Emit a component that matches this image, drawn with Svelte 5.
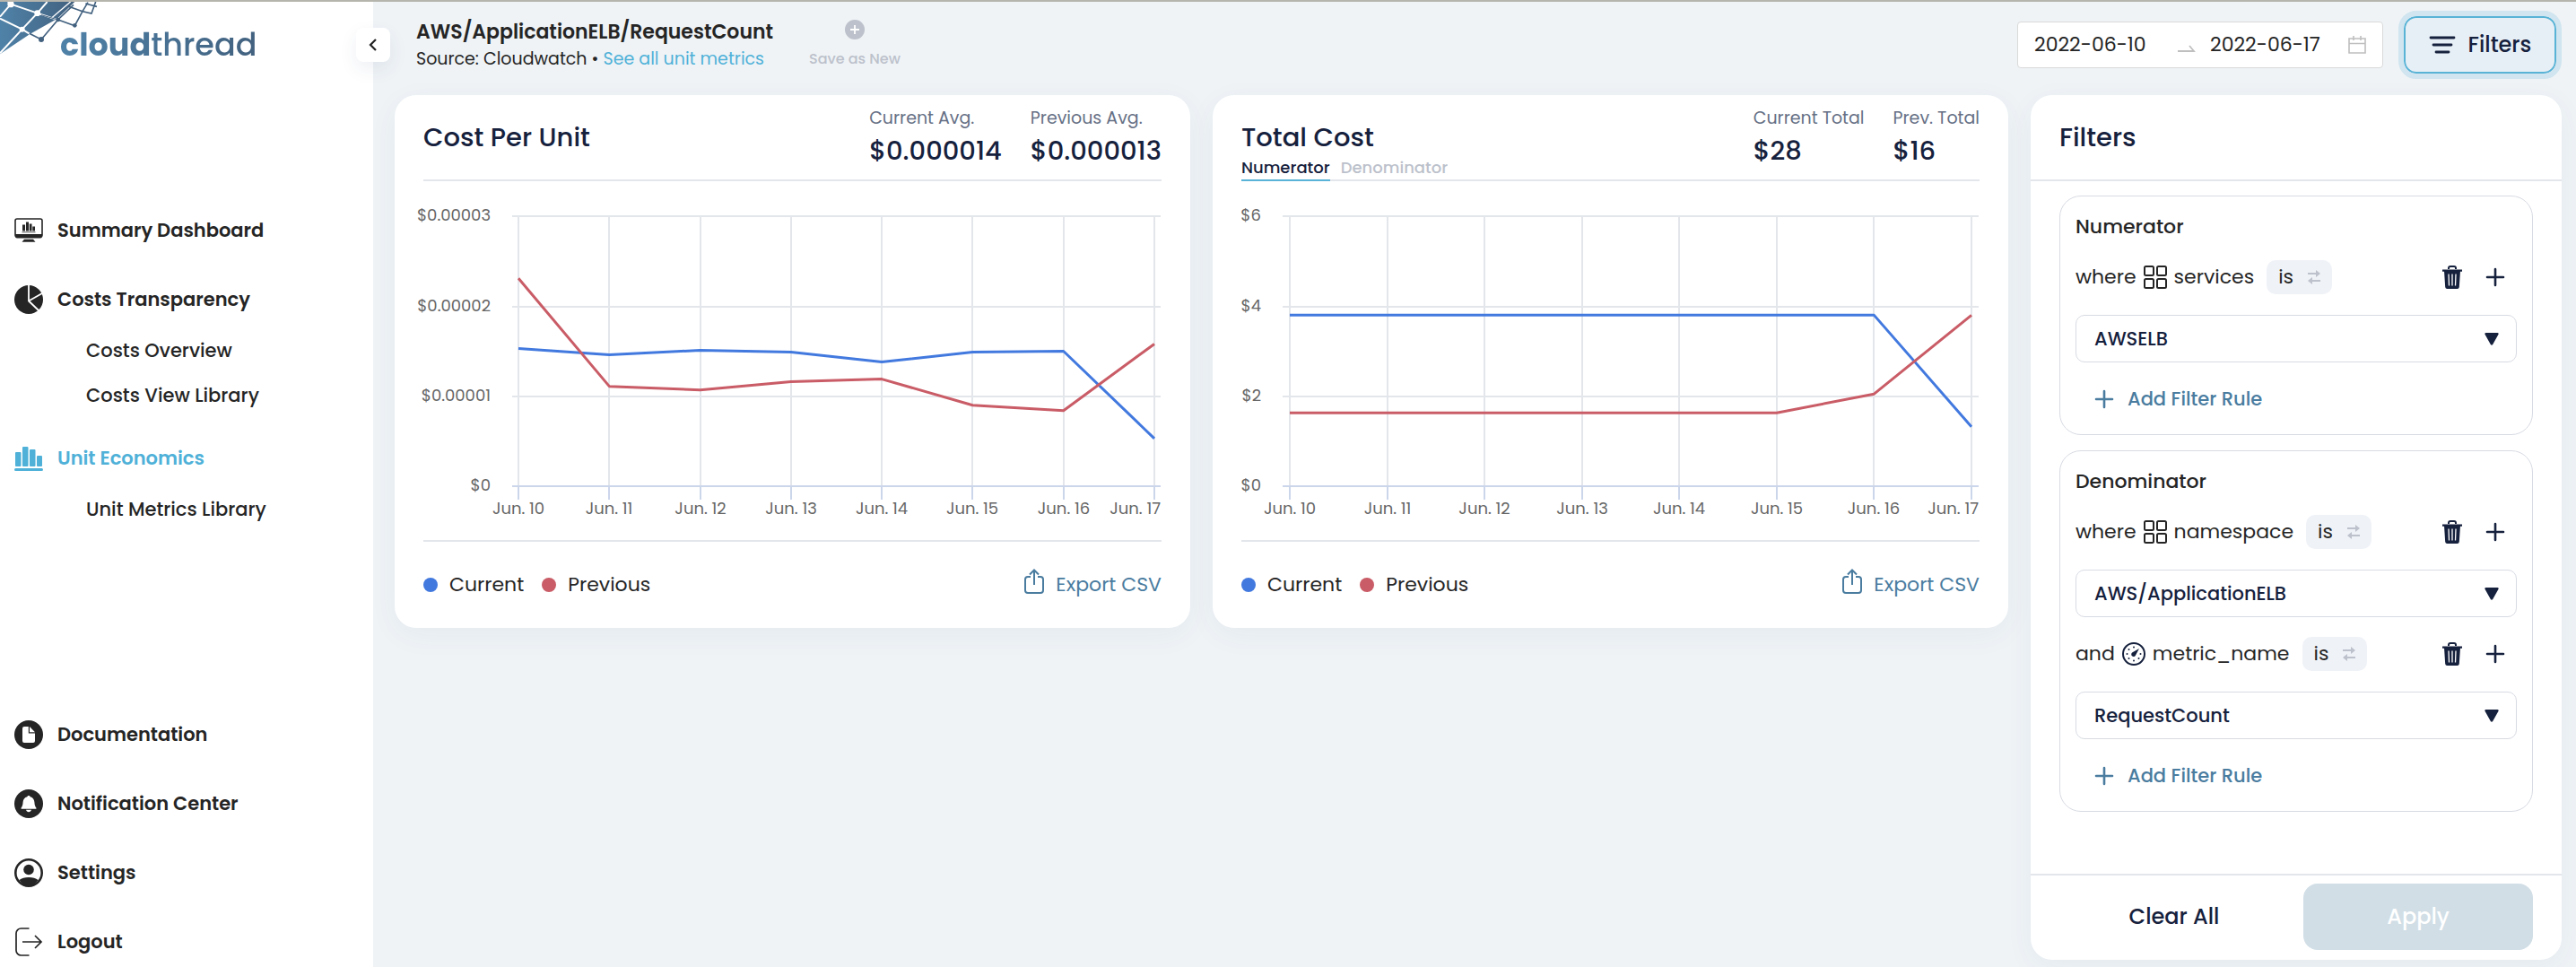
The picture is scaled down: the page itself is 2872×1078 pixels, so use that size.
<script>
  const days = ['Jun. 10', 'Jun. 11', 'Jun. 12', 'Jun. 13', 'Jun. 14', 'Jun. 15', 'Jun. 16', 'Jun. 17'];

  const charts = [
    {
      title: 'Cost Per Unit',
      tabs: [],
      stats: [
        { label: 'Current Avg.', value: '$0.000014' },
        { label: 'Previous Avg.', value: '$0.000013' }
      ],
      max: 30,
      ticks: [
        { at: 30, text: '$0.00003' },
        { at: 20, text: '$0.00002' },
        { at: 10, text: '$0.00001' },
        { at: 0, text: '$0' }
      ],
      axis: 99,
      inset: 7,
      current: [15.3, 14.6, 15.1, 14.9, 13.8, 14.9, 15, 5.3],
      previous: [23.1, 11.1, 10.7, 11.6, 11.9, 9, 8.4, 15.8]
    },
    {
      title: 'Total Cost',
      tabs: ['Numerator', 'Denominator'],
      stats: [
        { label: 'Current Total', value: '$28' },
        { label: 'Prev. Total', value: '$16' }
      ],
      max: 6,
      ticks: [
        { at: 6, text: '$6' },
        { at: 4, text: '$4' },
        { at: 2, text: '$2' },
        { at: 0, text: '$0' }
      ],
      axis: 46,
      inset: 8,
      current: [3.8, 3.8, 3.8, 3.8, 3.8, 3.8, 3.8, 1.32],
      previous: [1.63, 1.63, 1.63, 1.63, 1.63, 1.63, 2.05, 3.8]
    }
  ];

  const groups = [
    {
      name: 'Numerator',
      rules: [{ join: 'where', icon: 'grid', field: 'services', value: 'AWSELB' }]
    },
    {
      name: 'Denominator',
      rules: [
        { join: 'where', icon: 'grid', field: 'namespace', value: 'AWS/ApplicationELB' },
        { join: 'and', icon: 'gauge', field: 'metric_name', value: 'RequestCount' }
      ]
    }
  ];

  const mainNav = [
    { label: 'Summary Dashboard', icon: 'monitor' },
    { label: 'Costs Transparency', icon: 'pie', children: ['Costs Overview', 'Costs View Library'] },
    { label: 'Unit Economics', icon: 'bars', active: true, children: ['Unit Metrics Library'] }
  ];

  const footNav = [
    { label: 'Documentation', icon: 'doc' },
    { label: 'Notification Center', icon: 'bell' },
    { label: 'Settings', icon: 'user' },
    { label: 'Logout', icon: 'logout' }
  ];

  const plotTop = 39;
  const plotHeight = 301;
  let widths = $state([823, 823]);

  const yAt = (chart, value) => plotTop + plotHeight * (1 - value / chart.max);
  const xAt = (chart, width, i) => {
    const left = chart.axis + chart.inset;
    return left + ((width - 1 - chart.inset - left) * i) / (days.length - 1);
  };
  const points = (chart, width, series) =>
    series.map((value, i) => `${xAt(chart, width, i)},${yAt(chart, value)}`).join(' ');
</script>

{#snippet icon(name)}
  {#if name === 'monitor'}
    <svg class="nav-icon" viewBox="0 0 32 32" aria-hidden="true">
      <rect x="1" y="3" width="30" height="20" rx="2" fill="none" stroke="currentColor" stroke-width="1.6" />
      <path d="M1 20h30v2.500a2 2 0 0 1-2 2H3a2 2 0 0 1-2-2zM11 25.800h10l2.500 3h-15z" fill="currentColor" />
      <path d="M9 9.500h3v7H9zM13 6.500h3v10h-3zM16.800 8.500h2.700v8h-2.700zM20.300 11.500H23v5h-2.700zM8.500 17.500h15v.8h-15z" fill="currentColor" />
    </svg>
  {:else if name === 'pie'}
    <svg class="nav-icon" viewBox="0 0 32 32" aria-hidden="true">
      <circle cx="16" cy="16" r="16" fill="currentColor" />
      <path d="M16 0v17.500L28 29M16 17.500L31 9" fill="none" stroke="#fff" stroke-width="1.800" />
    </svg>
  {:else if name === 'bars'}
    <svg class="nav-icon" viewBox="0 0 32 32" aria-hidden="true">
      <g fill="currentColor">
        <rect x="1" y="9" width="6.500" height="16" rx="1" />
        <rect x="9" y="3" width="6.500" height="22" rx="1" />
        <rect x="17" y="6" width="6.500" height="19" rx="1" />
        <rect x="25" y="13" width="6" height="12" rx="1" />
        <rect x="0" y="27" width="32" height="3" rx="1.500" />
      </g>
    </svg>
  {:else if name === 'doc'}
    <svg class="nav-icon" viewBox="0 0 32 32" aria-hidden="true">
      <circle cx="16" cy="16" r="16" fill="currentColor" />
      <path d="M11 7h4.800v7.500H23V23a2 2 0 0 1-2 2H11a2 2 0 0 1-2-2V9a2 2 0 0 1 2-2z" fill="#fff" />
      <path d="M17 7l6 6.300h-6z" fill="#fff" />
    </svg>
  {:else if name === 'bell'}
    <svg class="nav-icon" viewBox="0 0 32 32" aria-hidden="true">
      <circle cx="16" cy="16" r="16" fill="currentColor" />
      <path d="M16 7c1 0 1.500.6 1.700 1.300 3 .8 4.500 3 4.700 6 .2 3.200.8 5 2 6.200v1.200H7.600v-1.200c1.200-1.200 1.800-3 2-6.200.2-3 1.700-5.200 4.700-6C14.500 7.600 15 7 16 7zM13 22.800h6c-.4 1.600-1.500 2.400-3 2.400s-2.600-.8-3-2.400z" fill="#fff" />
    </svg>
  {:else if name === 'user'}
    <svg class="nav-icon" viewBox="0 0 32 32" aria-hidden="true">
      <circle cx="16" cy="16" r="14.700" fill="#fff" stroke="currentColor" stroke-width="2.600" />
      <circle cx="16" cy="12.500" r="5.800" fill="currentColor" />
      <path d="M5.500 24c2.500-2 6-3 10.500-3s8 1 10.500 3A14.500 14.500 0 0 1 16 31 14.500 14.500 0 0 1 5.500 24z" fill="currentColor" />
    </svg>
  {:else if name === 'logout'}
    <svg class="nav-icon" viewBox="0 0 32 32" fill="none" stroke="currentColor" stroke-width="1.700" aria-hidden="true">
      <path d="M16.500 1H7.500A5.500 5.500 0 0 0 2 6.500v19A5.500 5.500 0 0 0 7.500 31h9M9 16h21M23 9l7 7-7 7" />
    </svg>
  {:else if name === 'grid'}
    <svg class="rule-icon" viewBox="0 0 26 26" fill="none" stroke="#252525" stroke-width="2" aria-hidden="true">
      <rect x="1" y="1" width="10" height="10" rx="1.500" />
      <rect x="15" y="1" width="10" height="10" rx="1.500" />
      <rect x="1" y="15" width="10" height="10" rx="1.500" />
      <rect x="15" y="15" width="10" height="10" rx="1.500" />
    </svg>
  {:else if name === 'gauge'}
    <svg class="rule-icon" viewBox="0 0 26 26" aria-hidden="true">
      <circle cx="13" cy="13" r="12" fill="none" stroke="#16213d" stroke-width="2" />
      <path d="M19 7l-4 7.500a2.500 2.500 0 1 1-3.500-3.200z" fill="#16213d" />
      <g fill="#16213d">
        <circle cx="13" cy="5.500" r="1" /><circle cx="7.500" cy="8" r="1" /><circle cx="5.500" cy="13" r="1" />
        <circle cx="7.500" cy="18" r="1" /><circle cx="18.500" cy="18" r="1" /><circle cx="20.500" cy="13" r="1" />
        <circle cx="13" cy="20.500" r="1" />
      </g>
    </svg>
  {:else if name === 'plus'}
    <svg class="plus" viewBox="0 0 22 22" fill="none" stroke="currentColor" stroke-width="2.600" stroke-linecap="round" aria-hidden="true">
      <path d="M11 2v18M2 11h18" />
    </svg>
  {:else if name === 'trash'}
    <svg class="trash" viewBox="0 0 22 26" aria-hidden="true">
      <path d="M7 4V3a2 2 0 0 1 2-2h4a2 2 0 0 1 2 2v1" fill="none" stroke="currentColor" stroke-width="2" />
      <path d="M0 4.500h22v2.300H0zM2 6h18l-1.200 18a2.200 2.200 0 0 1-2.200 2H5.400a2.200 2.200 0 0 1-2.200-2z" fill="currentColor" />
      <path d="M7 9.500l.5 13M11 9.500v13M15 9.500l-.5 13" fill="none" stroke="#fff" stroke-width="1.300" />
    </svg>
  {/if}
{/snippet}

<div class="app">
  <aside>
    <a class="brand" href="#home">
      <svg class="mesh" viewBox="0 6 330 180" aria-hidden="true">
        <defs>
          <linearGradient id="mesh-fill" x1="0" x2="1">
            <stop offset="0" stop-color="#4f82a8" />
            <stop offset="1" stop-color="#42617f" />
          </linearGradient>
        </defs>
        <path d="M0 6h250L192 62 100 114 0 181z" fill="url(#mesh-fill)" />
        <g fill="none" stroke="#fff" stroke-width="6">
          <path d="M0 62l74 36 28 17M74 98L0 178M74 98l51-54L158 6M125 44L36 14 0 56M36 14L22 0M125 44l72 24" />
          <path d="M170 62L236 6" stroke-width="4" />
        </g>
        <g fill="#fff">
          <circle cx="36" cy="14" r="11" /><circle cx="125" cy="44" r="10" /><circle cx="74" cy="98" r="9" />
        </g>
        <g fill="none" stroke="#42617f" stroke-width="5">
          <path d="M98 112l40 20 56-66 56 20 26-48 30 7 14-39M194 66l52-50M226 20l50 18M276 38l18-30M286 12l38 10" />
          <path d="M138 50l56 16" stroke-width="3" />
        </g>
        <g fill="#42617f">
          <circle cx="138" cy="132" r="9" /><circle cx="194" cy="66" r="7" /><circle cx="250" cy="85" r="7" />
        </g>
      </svg>
      <span class="wordmark"><b>cloud</b>thread</span>
    </a>
    <nav class="main-nav">
      {#each mainNav as item}
        <a class="item" class:active={item.active} href="#nav">{@render icon(item.icon)}{item.label}</a>
        {#if item.children}
          <div class="children">
            {#each item.children as child}<a class="child" href="#nav">{child}</a>{/each}
          </div>
        {/if}
      {/each}
    </nav>
    <nav class="foot-nav">
      {#each footNav as item}
        <a class="item" href="#nav">{@render icon(item.icon)}{item.label}</a>
      {/each}
    </nav>
    <button class="collapse" aria-label="Collapse menu">
      <svg viewBox="0 0 10 14" fill="none" stroke="#222" stroke-width="2.200" aria-hidden="true"><path d="M8 1L2 7l6 6" /></svg>
    </button>
  </aside>

  <main>
    <header>
      <div class="heading">
        <h1>AWS/ApplicationELB/RequestCount</h1>
        <p>Source: Cloudwatch • <a href="#metrics">See all unit metrics</a></p>
      </div>
      <button class="save" disabled>
        <svg viewBox="0 0 22 22" aria-hidden="true">
          <circle cx="11" cy="11" r="11" fill="#bcc1cb" />
          <path d="M11 6v10M6 11h10" stroke="#fff" stroke-width="1.800" />
        </svg>
        Save as New
      </button>
      <div class="range">
        <input aria-label="Start date" value="2022-06-10" />
        <svg class="arrow" viewBox="0 0 20 8" fill="none" stroke="#bfbfbf" stroke-width="1.800" aria-hidden="true"><path d="M0 7h18L13 1" /></svg>
        <input aria-label="End date" value="2022-06-17" />
        <svg class="calendar" viewBox="0 0 20 20" fill="none" stroke="#bfbfbf" stroke-width="1.600" aria-hidden="true">
          <path d="M1 3h18v16H1zM1 8.500h18M6 0v5M14 0v5" />
        </svg>
      </div>
      <button class="filters-toggle">
        <svg viewBox="0 0 30 20" stroke="currentColor" stroke-width="2.800" stroke-linecap="round" aria-hidden="true">
          <path d="M2 2h26M5 10h20M8 18h14" />
        </svg>
        Filters
      </button>
    </header>

    <div class="content">
      {#each charts as chart, c}
        <section class="card">
          <div class="card-head">
            <div class="titles">
              <h2>{chart.title}</h2>
              {#if chart.tabs.length}
                <div class="tabs" role="tablist">
                  {#each chart.tabs as tab, t}
                    <button role="tab" aria-selected={t === 0} class:selected={t === 0}>{tab}</button>
                  {/each}
                </div>
              {/if}
            </div>
            <dl>
              {#each chart.stats as stat}
                <div><dt>{stat.label}</dt><dd>{stat.value}</dd></div>
              {/each}
            </dl>
          </div>
          <div class="plot" bind:clientWidth={widths[c]}>
            <svg width={widths[c]} height="400" role="img" aria-label={chart.title}>
              {#each days as day, i}
                {@const x = Math.round(xAt(chart, widths[c], i))}
                {@const last = i === days.length - 1}
                <line class="grid" x1={x} x2={x} y1={plotTop} y2={plotTop + plotHeight} />
                <line class="base" x1={x} x2={x} y1={plotTop + plotHeight} y2={plotTop + plotHeight + 15} />
                <text x={last ? widths[c] - 1 : x} y="371" text-anchor={last ? 'end' : 'middle'}>{day}</text>
              {/each}
              {#each chart.ticks as tick}
                {@const y = Math.ceil(yAt(chart, tick.at))}
                <line class={tick.at ? 'grid' : 'base'} x1={chart.axis} x2={widths[c] - 1} y1={y} y2={y} />
                <text x={chart.axis - 24} y={y + 5} text-anchor="end">{tick.text}</text>
              {/each}
              <polyline class="current" points={points(chart, widths[c], chart.current)} />
              <polyline class="previous" points={points(chart, widths[c], chart.previous)} />
            </svg>
          </div>
          <div class="card-foot">
            <span class="key"><i class="dot current"></i>Current</span>
            <span class="key"><i class="dot previous"></i>Previous</span>
            <button class="export">
              <svg viewBox="0 0 22 28" fill="none" stroke="currentColor" stroke-width="2" aria-hidden="true">
                <path d="M7 9H4a3 3 0 0 0-3 3v12a3 3 0 0 0 3 3h14a3 3 0 0 0 3-3V12a3 3 0 0 0-3-3h-3M11 18V2M6 6.500L11 1.500l5 5" />
              </svg>
              Export CSV
            </button>
          </div>
        </section>
      {/each}

      <section class="panel">
        <h2>Filters</h2>
        <div class="groups">
          {#each groups as group}
            <fieldset>
              <h3>{group.name}</h3>
              {#each group.rules as rule}
                <div class="rule">
                  <span>{rule.join}</span>
                  {@render icon(rule.icon)}
                  <span>{rule.field}</span>
                  <button class="operator">
                    is
                    <svg viewBox="0 0 14 16" aria-hidden="true">
                      <path d="M0 4h10M14 12H4" stroke="#bcc1cb" stroke-width="2" />
                      <path d="M9 0l5 4-5 4zM5 8l-5 4 5 4z" fill="#bcc1cb" />
                    </svg>
                  </button>
                  <button class="tool push" aria-label="Delete rule">{@render icon('trash')}</button>
                  <button class="tool" aria-label="Add rule">{@render icon('plus')}</button>
                </div>
                <div class="select">
                  <select aria-label={rule.field}><option>{rule.value}</option></select>
                  <svg viewBox="0 0 16 14" aria-hidden="true"><path d="M1.500 0h13a1.200 1.200 0 0 1 1 1.800L9.200 13a1.400 1.400 0 0 1-2.400 0L.5 1.800A1.200 1.200 0 0 1 1.500 0z" fill="#16213d" /></svg>
                </div>
              {/each}
              <button class="add">{@render icon('plus')}Add Filter Rule</button>
            </fieldset>
          {/each}
        </div>
        <div class="actions">
          <button>Clear All</button>
          <button class="apply" disabled>Apply</button>
        </div>
      </section>
    </div>
  </main>
</div>

<style>
  :global(body) {
    margin: 0;
  }
  .app {
    display: flex;
    box-sizing: border-box;
    min-height: 100vh;
    border-top: 2px solid #b6b5ad;
    background: #eff3f6;
    color: #252525;
    font-family: Poppins, Inter, 'Open Sans', sans-serif;
    font-size: 22px;
    line-height: 32px;
  }
  .app :global(*) {
    box-sizing: border-box;
  }
  button,
  input,
  select {
    margin: 0;
    padding: 0;
    border: 0;
    background: none;
    color: inherit;
    font: inherit;
  }
  a {
    color: inherit;
    text-decoration: none;
  }
  svg {
    display: block;
    flex: none;
  }
  h1,
  h2,
  h3,
  p,
  dl,
  dd {
    margin: 0;
  }

  aside {
    position: relative;
    display: flex;
    flex: none;
    flex-direction: column;
    width: 416px;
    background: #fff;
  }
  .brand {
    display: flex;
    height: 216px;
    color: #456785;
  }
  .mesh {
    width: 110px;
    height: 60px;
    margin-right: -43px;
  }
  .wordmark {
    height: 72px;
    padding-top: 28px;
    background: linear-gradient(90deg, #4f82a8, #42617f);
    background-clip: text;
    color: transparent;
    font-size: 35px;
    font-weight: 500;
    line-height: 40px;
  }
  .item {
    display: flex;
    align-items: center;
    gap: 16px;
    height: 77px;
    padding-left: 16px;
    font-size: 21px;
    font-weight: 600;
  }
  .active {
    color: #4fb1d8;
  }
  .nav-icon {
    width: 32px;
    height: 32px;
  }
  .children {
    display: flex;
    flex-direction: column;
    margin: -6px 0 6px;
  }
  .child {
    padding: 9px 0 9px 96px;
    font-size: 21px;
    font-weight: 500;
  }
  .foot-nav {
    margin-top: auto;
    margin-bottom: -10px;
  }
  .collapse {
    position: absolute;
    top: 29px;
    right: -19px;
    display: flex;
    align-items: center;
    justify-content: center;
    width: 38px;
    height: 38px;
    border-radius: 8px;
    background: #fff;
    box-shadow: 0 8px 20px rgb(40 70 110 / 8%);
  }
  .collapse svg {
    width: 10px;
    height: 14px;
  }

  main {
    display: flex;
    flex: 1;
    flex-direction: column;
    min-width: 0;
    padding: 0 16px 8px 24px;
  }
  header {
    display: flex;
    align-items: center;
    height: 104px;
    padding: 0 6px 8px 24px;
  }
  h1 {
    font-size: 22px;
    font-weight: 600;
    line-height: 32px;
  }
  .heading p {
    font-size: 19px;
    line-height: 28px;
  }
  .heading a {
    color: #4fb1d8;
  }
  .save {
    display: flex;
    flex-direction: column;
    align-items: center;
    gap: 10px;
    margin-left: 40px;
    color: #bcc1cb;
    font-size: 16px;
    font-weight: 500;
    line-height: 24px;
  }
  .save svg {
    width: 22px;
    height: 22px;
  }
  .range {
    display: flex;
    align-items: center;
    width: 408px;
    height: 52px;
    margin-left: auto;
    padding: 0 18px;
    border: 1px solid #d9d9d9;
    border-radius: 4px;
    background: #fff;
  }
  .range input {
    width: 140px;
    font-size: 22px;
  }
  .arrow {
    width: 20px;
    height: 8px;
    margin: 8px 16px 0 20px;
  }
  .calendar {
    width: 20px;
    height: 20px;
    margin-left: auto;
  }
  .filters-toggle {
    display: flex;
    align-items: center;
    justify-content: center;
    gap: 14px;
    width: 170px;
    height: 64px;
    margin-left: 23px;
    border: 2px solid #58b3d6;
    border-radius: 14px;
    outline: 6px solid #d0e5ef;
    background: #e7eff6;
    color: #16213d;
    font-size: 24px;
    font-weight: 500;
  }
  .filters-toggle svg {
    width: 30px;
    height: 20px;
  }

  .content {
    display: flex;
    flex: 1;
    align-items: flex-start;
    gap: 25px;
  }
  .card,
  .panel {
    border-radius: 24px;
    background: #fff;
    box-shadow: 0 8px 32px rgb(40 80 110 / 5%);
  }
  .card {
    flex: 1;
    min-width: 0;
    padding: 0 32px;
  }
  .card-head {
    display: flex;
    justify-content: space-between;
    height: 96px;
    border-bottom: 2px solid #e3e6eb;
  }
  h2 {
    padding-top: 30px;
    color: #16213d;
    font-size: 29px;
    font-weight: 500;
    line-height: 34px;
  }
  .tabs {
    display: flex;
    gap: 12px;
    height: 32px;
  }
  .tabs button {
    padding-top: 4px;
    border-bottom: 2px solid transparent;
    color: #bcc1cb;
    font-size: 18px;
    font-weight: 500;
    line-height: 26px;
  }
  .tabs .selected {
    border-color: #58b3d6;
    color: #16213d;
  }
  dl {
    display: flex;
    gap: 32px;
    padding-top: 12px;
  }
  dt {
    color: #667085;
    font-size: 19px;
    line-height: 28px;
  }
  dd {
    color: #16213d;
    font-size: 29px;
    font-weight: 500;
    line-height: 44px;
  }
  .plot {
    height: 402px;
    border-bottom: 2px solid #e3e6eb;
  }
  .plot svg {
    overflow: visible;
  }
  .plot text {
    fill: #666;
    font-size: 18px;
  }
  line {
    stroke-width: 2px;
  }
  .grid {
    stroke: #e3e6eb;
  }
  .base {
    stroke: #ccd6eb;
  }
  polyline {
    fill: none;
    stroke-width: 3px;
    stroke-linejoin: round;
  }
  polyline.current {
    stroke: #4279df;
  }
  polyline.previous {
    stroke: #c95c66;
  }
  .card-foot {
    display: flex;
    align-items: center;
    gap: 20px;
    height: 96px;
  }
  .key,
  .export {
    display: flex;
    align-items: center;
    gap: 13px;
  }
  .dot {
    width: 16px;
    height: 16px;
    border-radius: 50%;
  }
  .dot.current {
    background: #4279df;
  }
  .dot.previous {
    background: #c95c66;
  }
  .export {
    margin-left: auto;
    color: #4a7c9f;
  }
  .export svg {
    width: 22px;
    height: 28px;
    margin-bottom: 8px;
  }

  .panel {
    display: flex;
    flex: none;
    flex-direction: column;
    align-self: stretch;
    width: 592px;
  }
  .panel h2 {
    height: 96px;
    padding-left: 32px;
    border-bottom: 2px solid #e3e6eb;
  }
  .groups {
    display: flex;
    flex: 1;
    flex-direction: column;
    gap: 17px;
    padding: 16px 32px;
  }
  fieldset {
    min-width: 0;
    margin: 0;
    padding: 16px 17px 18px;
    border: 1px solid #d8dbe3;
    border-radius: 24px;
  }
  h3 {
    margin-bottom: 17px;
    font-size: 22px;
    font-weight: 500;
    line-height: 36px;
  }
  .rule {
    display: flex;
    align-items: center;
    gap: 8px;
    height: 42px;
    margin-bottom: 21px;
    padding-right: 4px;
  }
  .rule-icon {
    width: 26px;
    height: 26px;
  }
  .operator {
    display: flex;
    align-items: center;
    gap: 16px;
    height: 38px;
    margin-left: 6px;
    padding: 0 13px;
    border-radius: 10px;
    background: #eff2f7;
  }
  .operator svg {
    width: 14px;
    height: 16px;
  }
  .tool {
    display: flex;
    justify-content: center;
    width: 40px;
    color: #16213d;
  }
  .push {
    margin-left: auto;
  }
  .trash {
    width: 22px;
    height: 26px;
  }
  .plus {
    width: 22px;
    height: 22px;
  }
  .select {
    position: relative;
    margin-bottom: 20px;
  }
  .select select {
    display: block;
    width: 100%;
    height: 53px;
    padding: 0 20px;
    border: 1px solid #d8dbe3;
    border-radius: 10px;
    appearance: none;
    color: #16213d;
    font-size: 21px;
    font-weight: 500;
  }
  .select svg {
    position: absolute;
    top: 20px;
    right: 20px;
    width: 16px;
    height: 14px;
    pointer-events: none;
  }
  .add {
    display: flex;
    align-items: center;
    gap: 15px;
    height: 42px;
    padding-left: 21px;
    color: #4a7c9f;
    font-size: 21px;
    font-weight: 500;
  }
  .actions {
    display: grid;
    grid-template-columns: 1fr 1fr;
    gap: 16px;
    padding: 9px 32px 11px;
    border-top: 2px solid #e3e6eb;
    color: #16213d;
    font-size: 24px;
    font-weight: 500;
  }
  .actions button {
    height: 74px;
    border-radius: 16px;
  }
  .actions .apply {
    background: #d1dee6;
    color: #fff;
  }
</style>
